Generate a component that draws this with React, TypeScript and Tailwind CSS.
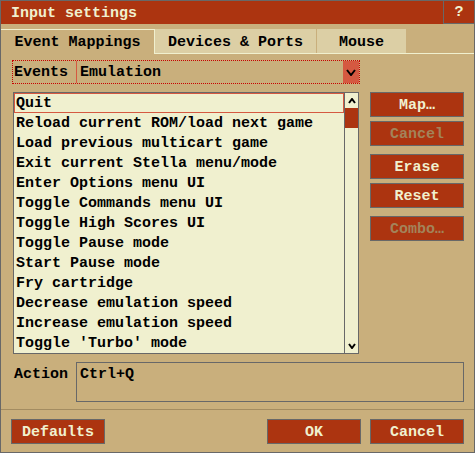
import React from "react";

const events = [
  "Quit",
  "Reload current ROM/load next game",
  "Load previous multicart game",
  "Exit current Stella menu/mode",
  "Enter Options menu UI",
  "Toggle Commands menu UI",
  "Toggle High Scores UI",
  "Toggle Pause mode",
  "Start Pause mode",
  "Fry cartridge",
  "Decrease emulation speed",
  "Increase emulation speed",
  "Toggle 'Turbo' mode",
];

function Chevron({ up = false, w = 9, h = 6 }: { up?: boolean; w?: number; h?: number }) {
  return (
    <svg width={w} height={h} viewBox={`0 0 ${w} ${h}`} className="block">
      <polyline
        points={up ? `1,${h - 1} ${w / 2},1 ${w - 1},${h - 1}` : `1,1 ${w / 2},${h - 1} ${w - 1},1`}
        fill="none"
        stroke="#000"
        strokeWidth="2"
      />
    </svg>
  );
}

function Btn({ label, disabled = false, className = "" }: { label: string; disabled?: boolean; className?: string }) {
  return (
    <div
      className={`h-[25px] w-[94px] border border-[#686868] bg-[#ac3410] flex items-center justify-center pt-px ${
        disabled ? "text-[#a3835a]" : "text-[#f0f0cf]"
      } ${className}`}
    >
      {label}
    </div>
  );
}

export default function App() {
  return (
    <div
      className="w-[475px] h-[453px] border border-[#686868] bg-[#c9af7c] flex flex-col text-black text-[15px] font-bold leading-none"
      style={{ fontFamily: '"Liberation Mono", "DejaVu Sans Mono", monospace' }}
    >
      {/* title bar */}
      <div className="h-[23px] flex bg-[#ac3410] text-[#f0f0cf]">
        <div className="flex-1 flex items-center pl-[10px] pt-px">Input settings</div>
        <div className="w-[31px] border-l border-b border-[#686868] flex items-center justify-center">?</div>
      </div>

      {/* tabs */}
      <div className="mt-[5px] flex h-[25px]">
        <div className="w-[154px] h-[25px] border-t border-r border-[#f0f0cf] flex items-center justify-center pt-px">
          Event Mappings
        </div>
        <div className="flex-1 flex gap-px border-b border-[#f0f0cf]">
          <div className="w-[161px] bg-[#dccfa5] flex items-center justify-center pt-[2px]">Devices &amp; Ports</div>
          <div className="w-[89px] bg-[#dccfa5] flex items-center justify-center pt-[2px]">Mouse</div>
        </div>
      </div>

      {/* events popup */}
      <div className="mt-[6px] ml-[11px] w-[348px] h-[24px] border border-dotted border-[#c80000] flex">
        <div className="w-[63px] pl-px pt-px flex items-center">Events</div>
        <div className="flex-1 border-l border-[#d55941] flex">
          <div className="flex-1 pl-[3px] pt-px flex items-center">Emulation</div>
          <div className="w-[16px] bg-[#d55941] flex items-center justify-center">
            <Chevron w={10} h={7} />
          </div>
        </div>
      </div>

      {/* list + buttons */}
      <div className="mt-[8px] flex">
        <div className="ml-[12px] w-[346px] h-[262px] border border-[#686868] bg-[#f0f0cf] flex">
          <div className="flex-1 flex flex-col">
            {events.map((e, i) => (
              <div
                key={e}
                className={`h-[20px] pl-[2px] pt-px flex items-center whitespace-nowrap ${
                  i === 0 ? "border border-[#d55941] pl-px" : ""
                }`}
              >
                {e}
              </div>
            ))}
          </div>
          <div className="w-[14px] border-l border-[#686868] flex flex-col">
            <div className="h-[15px] flex items-center justify-center">
              <Chevron up w={8} h={6} />
            </div>
            <div className="h-[20px] bg-[#ac3410]" />
            <div className="flex-1" />
            <div className="h-[15px] flex items-center justify-center">
              <Chevron w={8} h={6} />
            </div>
          </div>
        </div>
        <div className="ml-[11px] flex flex-col">
          <Btn label="Map…" />
          <Btn label="Cancel" disabled className="mt-[4px]" />
          <Btn label="Erase" className="mt-[8px]" />
          <Btn label="Reset" className="mt-[4px]" />
          <Btn label="Combo…" disabled className="mt-[8px]" />
        </div>
      </div>

      {/* action */}
      <div className="mt-[8px] ml-[12px] flex h-[40px]">
        <div className="w-[63px] pl-px pt-[5px]">Action</div>
        <div className="w-[388px] border border-[#686868] pl-[3px] pt-[4px]">Ctrl+Q</div>
      </div>

      <div className="mt-[7px] h-px bg-[#a38c61]" />

      {/* bottom buttons */}
      <div className="mt-[9px] flex">
        <Btn label="Defaults" className="ml-[10px]" />
        <Btn label="OK" className="ml-[162px]" />
        <Btn label="Cancel" className="ml-[9px]" />
      </div>
    </div>
  );
}
